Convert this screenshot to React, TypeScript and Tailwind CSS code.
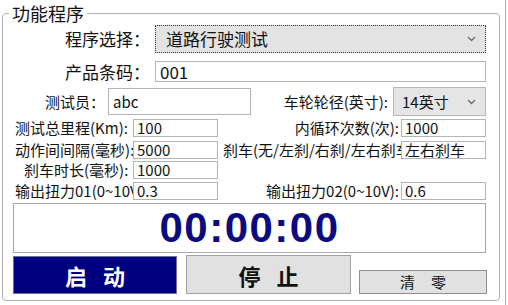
import React from "react";

const Chevron = () => (
  <svg width="9" height="6" viewBox="0 0 9 6" className="shrink-0">
    <path d="M1 1 L4.5 4.5 L8 1" fill="none" stroke="#6b6b6b" strokeWidth="1.3" />
  </svg>
);

const Field = ({ value, w }: { value: string; w: string }) => (
  <div
    className={`${w} h-[18px] border border-[#b4b4b4] bg-white pl-[3px] text-[15px] leading-[16px] whitespace-nowrap overflow-hidden`}
  >
    {value}
  </div>
);

export default function App() {
  return (
    <div
      className="w-[508px] h-[305px] bg-white text-[#111] overflow-hidden"
      style={{ fontFamily: '"Noto Sans CJK SC", "Noto Sans", sans-serif' }}
    >
      <div className="w-[506px] h-[305px] border-r border-[#a9a9a9] pt-[3px]">
        <fieldset className="ml-[2px] w-[498px] h-[298px] border border-[#b0b0b0] rounded-[4px]">
          <legend className="ml-[6px] px-[3px] text-[18px] leading-[20px]">功能程序</legend>

          {/* Row 1 */}
          <div className="mt-[2px] h-[28px] flex items-center">
            <div className="w-[152px] pr-[5px] text-right text-[17px] leading-[20px]">程序选择：</div>
            <div className="w-[331px] h-[28px] border border-dotted border-[#333] bg-[#e3e3e3] flex items-center justify-between pl-[10px] pr-[9px]">
              <span className="text-[17px] leading-[20px]">道路行驶测试</span>
              <Chevron />
            </div>
          </div>

          {/* Row 2 */}
          <div className="mt-[8px] h-[21px] flex items-center">
            <div className="w-[152px] pr-[5px] text-right text-[17px] leading-[20px]">产品条码：</div>
            <div className="w-[331px] h-[21px] border border-[#b4b4b4] bg-white pl-[4px] text-[17px] leading-[19px]">001</div>
          </div>

          {/* Row 3 */}
          <div className="mt-[5px] h-[29px] flex items-center">
            <div className="w-[105px] pr-[3px] text-right text-[15px] leading-[18px]">测试员：</div>
            <div className="w-[143px] h-[27px] border border-[#b4b4b4] bg-white pl-[4px] text-[15px] leading-[25px]">abc</div>
            <div className="w-[142px] pr-[5px] text-right text-[15px] leading-[18px] whitespace-nowrap">车轮轮径(英寸):</div>
            <div className="w-[93px] h-[29px] border border-[#b8b8b8] bg-[#e5e5e5] flex items-center justify-between pl-[8px] pr-[9px]">
              <span className="text-[15px] leading-[18px]">14英寸</span>
              <Chevron />
            </div>
          </div>

          {/* Row 4 */}
          <div className="mt-[3px] h-[18px] flex items-center text-[15px] leading-[18px]">
            <div className="w-[130px] pl-[12px] whitespace-nowrap overflow-hidden">测试总里程(Km):</div>
            <Field value="100" w="w-[85px]" />
            <div className="w-[183px] pr-[2px] text-right whitespace-nowrap overflow-hidden">内循环次数(次):</div>
            <Field value="1000" w="w-[85px]" />
          </div>

          {/* Row 5 */}
          <div className="mt-[4px] h-[18px] flex items-center text-[15px] leading-[18px]">
            <div className="w-[130px] pl-[12px] whitespace-nowrap overflow-hidden">动作间间隔(毫秒):</div>
            <Field value="5000" w="w-[85px]" />
            <div className="w-[183px] pl-[5px] whitespace-nowrap overflow-hidden">刹车(无/左刹/右刹/左右刹车):</div>
            <Field value="左右刹车" w="w-[85px]" />
          </div>

          {/* Row 6 */}
          <div className="mt-[2px] h-[18px] flex items-center text-[15px] leading-[18px]">
            <div className="w-[130px] pl-[21px] whitespace-nowrap overflow-hidden">刹车时长(毫秒):</div>
            <Field value="1000" w="w-[85px]" />
          </div>

          {/* Row 7 */}
          <div className="mt-[3px] h-[18px] flex items-center text-[15px] leading-[18px]">
            <div className="w-[130px] pl-[12px] whitespace-nowrap overflow-hidden">输出扭力01(0~10V):</div>
            <Field value="0.3" w="w-[85px]" />
            <div className="w-[183px] pr-[2px] text-right whitespace-nowrap overflow-hidden">输出扭力02(0~10V):</div>
            <Field value="0.6" w="w-[85px]" />
          </div>

          {/* Timer */}
          <div className="mt-[3px] ml-[10px] w-[473px] h-[50px] border border-[#a8a8a8] bg-white flex items-center justify-center">
            <span
              className="text-[42px] leading-[46px] font-bold tracking-[1.5px] text-[#0c0c80]"
              style={{ fontFamily: '"Liberation Sans", Arial, sans-serif' }}
            >
              00:00:00
            </span>
          </div>

          {/* Buttons */}
          <div className="mt-[2px] ml-[10px] h-[39px] flex items-end">
            <div className="w-[164px] h-[38px] bg-[#000080] border border-[#6f6f9a] flex items-center justify-center gap-[16px] text-white text-[22px] font-bold leading-[26px]">
              <span>启</span>
              <span>动</span>
            </div>
            <div className="ml-[9px] w-[165px] h-[39px] bg-[#e1e1e1] border border-[#a0a0a0] flex items-center justify-center gap-[16px] text-[22px] font-bold leading-[26px]">
              <span>停</span>
              <span>止</span>
            </div>
            <div className="ml-[8px] w-[128px] h-[24px] bg-[#e1e1e1] border border-[#8f8f8f] flex items-center justify-center gap-[16px] text-[15px] leading-[18px]">
              <span>清</span>
              <span>零</span>
            </div>
          </div>
        </fieldset>
      </div>
    </div>
  );
}
